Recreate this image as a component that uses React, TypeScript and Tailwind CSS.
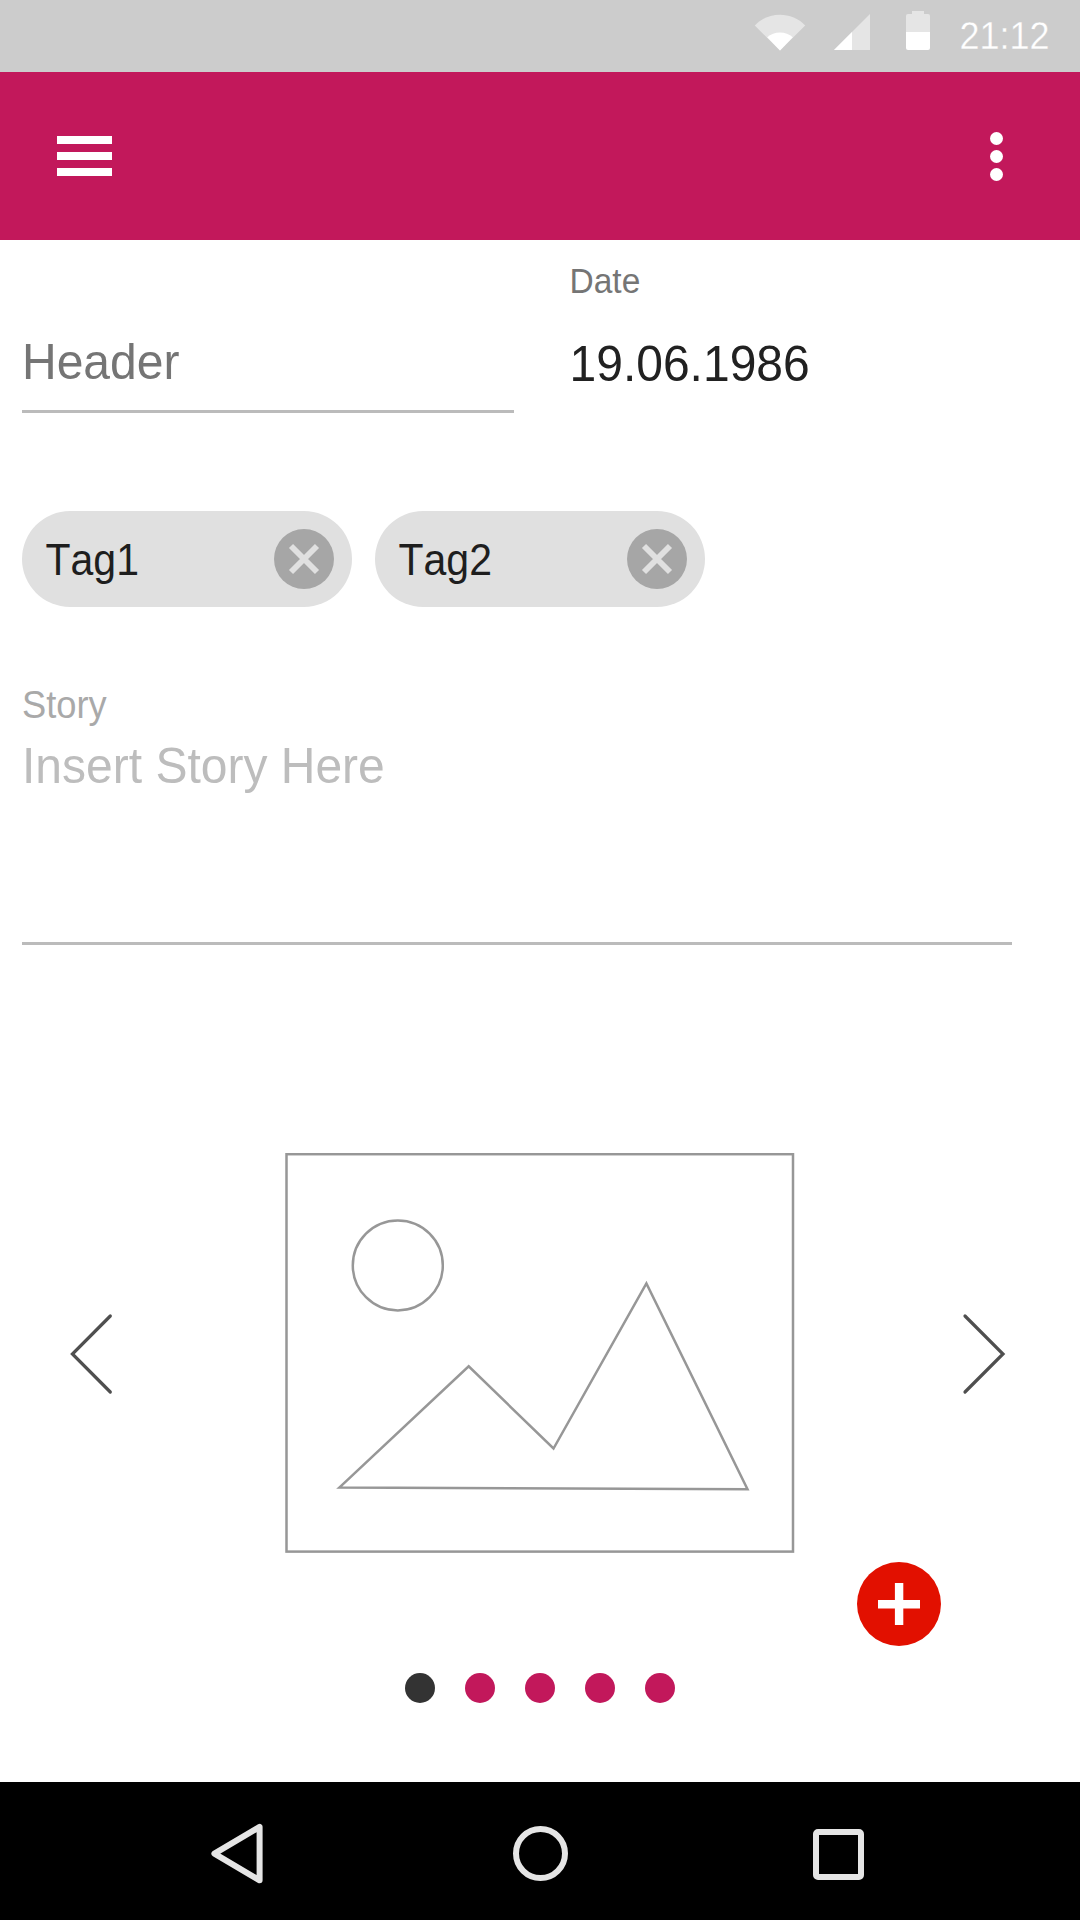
import type { ReactNode } from "react";

function StatusBar() {
  return (
    <div className="flex h-[72px] shrink-0 bg-[#cccccc] text-white">
      <svg className="ml-[754px] mt-[14px] h-[37px] w-[52px]" viewBox="0 0 52 37">
        <path d="M26 36.5 L0.8 11.5 C14 -2.9 38 -2.9 51.2 11.5 Z" fill="#e5e5e5" />
        <path d="M26 36.5 L13.2 23.3 C20 16.8 32 16.8 38.8 23.3 Z" fill="#ffffff" />
      </svg>
      <svg className="ml-[28px] mt-[14px] h-[36px] w-[36px]" viewBox="0 0 36 36">
        <path d="M0 36 L36 0 V36 Z" fill="#e5e5e5" />
        <path d="M0 36 L18 18 V36 Z" fill="#ffffff" />
      </svg>
      <svg className="ml-[36px] mt-[11px] h-[39px] w-[24px]" viewBox="0 0 24 39">
        <path d="M6 0 H18 V3 H22 Q24 3 24 5 V21 H0 V5 Q0 3 2 3 H6 Z" fill="#e5e5e5" />
        <path d="M0 21 H24 V37 Q24 39 22 39 H2 Q0 39 0 37 Z" fill="#ffffff" />
      </svg>
      <span className="ml-[29.5px] scale-y-[1.06] text-[36px] leading-[72px] [-webkit-text-stroke:0.3px_#cccccc]">
        21:12
      </span>
    </div>
  );
}

function AppBar() {
  return (
    <header className="flex h-[168px] shrink-0 items-start justify-between bg-[#c2185b] pl-[57px] pr-[77px]">
      <button className="mt-[64px] flex flex-col gap-2" aria-label="Menu">
        <span className="h-2 w-[55px] bg-white" />
        <span className="h-2 w-[55px] bg-white" />
        <span className="h-2 w-[55px] bg-white" />
      </button>
      <button className="mt-[60px] flex flex-col gap-[5px]" aria-label="More">
        <span className="size-[13px] rounded-full bg-white" />
        <span className="size-[13px] rounded-full bg-white" />
        <span className="size-[13px] rounded-full bg-white" />
      </button>
    </header>
  );
}

function Chip({ children }: { children: ReactNode }) {
  return (
    <div className="flex h-[96px] w-[330px] items-center justify-between rounded-full bg-[#e0e0e0] pl-[23.5px] pr-[18px]">
      <span className="scale-y-[1.06] pt-[2px] text-[41px] leading-[48px] text-[#1e1e1e] [font-kerning:none]">
        {children}
      </span>
      <svg className="size-[60px]" viewBox="0 0 60 60">
        <circle cx="30" cy="30" r="30" fill="#a6a6a6" />
        <path d="M17 17 L43 43 M43 17 L17 43" stroke="#e0e0e0" strokeWidth="5.8" />
      </svg>
    </div>
  );
}

function Chevron({ points }: { points: string }) {
  return (
    <svg className="h-[84px] w-[44px]" viewBox="0 0 44 84">
      <polyline points={points} fill="none" stroke="#4f4f4f" strokeWidth="3.2" strokeLinecap="round" />
    </svg>
  );
}

function Carousel() {
  return (
    <section className="mt-[208px]">
      <div className="flex h-[400px] items-center pl-[70px]">
        <Chevron points="40.3,5 2.4,43 40.3,81" />
        <svg className="ml-[171px] mr-[167px] h-[400px] w-[510px]" viewBox="0 0 510 400" fill="none" stroke="#979797" strokeWidth="2.5">
          <rect x="1.5" y="1.2" width="506.5" height="397.4" />
          <circle cx="112.8" cy="112.4" r="45" />
          <path d="M54.3 334.6 L183.7 213.3 L268.5 295.5 L361.4 130.4 L462.5 336.2 Z" />
        </svg>
        <Chevron points="3,5 41,43 3,81" />
      </div>
      <button className="ml-[857px] mt-[9px] block size-[84px] rounded-full bg-[#e21000]" aria-label="Add picture">
        <svg className="size-[84px]" viewBox="0 0 84 84">
          <path d="M21 42.2 H63 M42.1 21 V63" stroke="#ffffff" strokeWidth="8.4" />
        </svg>
      </button>
      <div className="ml-[405px] mt-[27px] flex gap-[30px]">
        <span className="size-[30px] rounded-full bg-[#333333]" />
        <span className="size-[30px] rounded-full bg-[#c2185b]" />
        <span className="size-[30px] rounded-full bg-[#c2185b]" />
        <span className="size-[30px] rounded-full bg-[#c2185b]" />
        <span className="size-[30px] rounded-full bg-[#c2185b]" />
      </div>
    </section>
  );
}

function NavBar() {
  return (
    <nav className="flex h-[138px] shrink-0 items-start bg-black pl-[210px]">
      <svg className="mt-[41px] h-[62px] w-[54px]" viewBox="0 0 54 62">
        <path d="M4.4 30.6 L49.6 3.9 V57.3 Z" fill="none" stroke="#e5e5e5" strokeWidth="6" strokeLinejoin="round" />
      </svg>
      <span className="ml-[249px] mt-[44px] size-[55px] rounded-full border-[6px] border-[#e5e5e5]" />
      <span className="ml-[245px] mt-[47px] h-[51px] w-[51px] rounded-[5px] border-[6px] border-[#e5e5e5]" />
    </nav>
  );
}

export default function App() {
  return (
    <div className="flex h-[1920px] w-[1080px] flex-col overflow-hidden bg-white font-['Liberation_Sans',Arial,sans-serif]">
      <StatusBar />
      <AppBar />
      <main className="flex-1">
        <div className="flex h-[173px] pl-[22px]">
          <div className="flex w-[492px] flex-col justify-end border-b-[3px] border-[#bbbbbb] pb-[24.5px]">
            <span className="scale-y-[1.06] text-[48px] leading-[48px] text-[#757575]">Header</span>
          </div>
          <div className="ml-[55.5px] flex flex-col pt-[21.5px]">
            <span className="scale-y-[1.04] text-[33.5px] leading-[40px] text-[#757575]">Date</span>
            <span className="mt-[37px] scale-y-[1.06] text-[48px] leading-[50px] text-[#212121]">19.06.1986</span>
          </div>
        </div>
        <div className="mt-[98px] flex gap-[23px] pl-[22px]">
          <Chip>Tag1</Chip>
          <Chip>Tag2</Chip>
        </div>
        <div className="ml-[22px] mt-[77px] flex h-[261px] w-[990px] flex-col border-b-[3px] border-[#bbbbbb] pt-px">
          <span className="scale-y-[1.05] text-[36.3px] leading-[40px] text-[#a9a9a9]">Story</span>
          <span className="mt-[15.5px] scale-y-[1.06] text-[48px] leading-[50px] text-[#bdbdbd]">Insert Story Here</span>
        </div>
        <Carousel />
      </main>
      <NavBar />
    </div>
  );
}
